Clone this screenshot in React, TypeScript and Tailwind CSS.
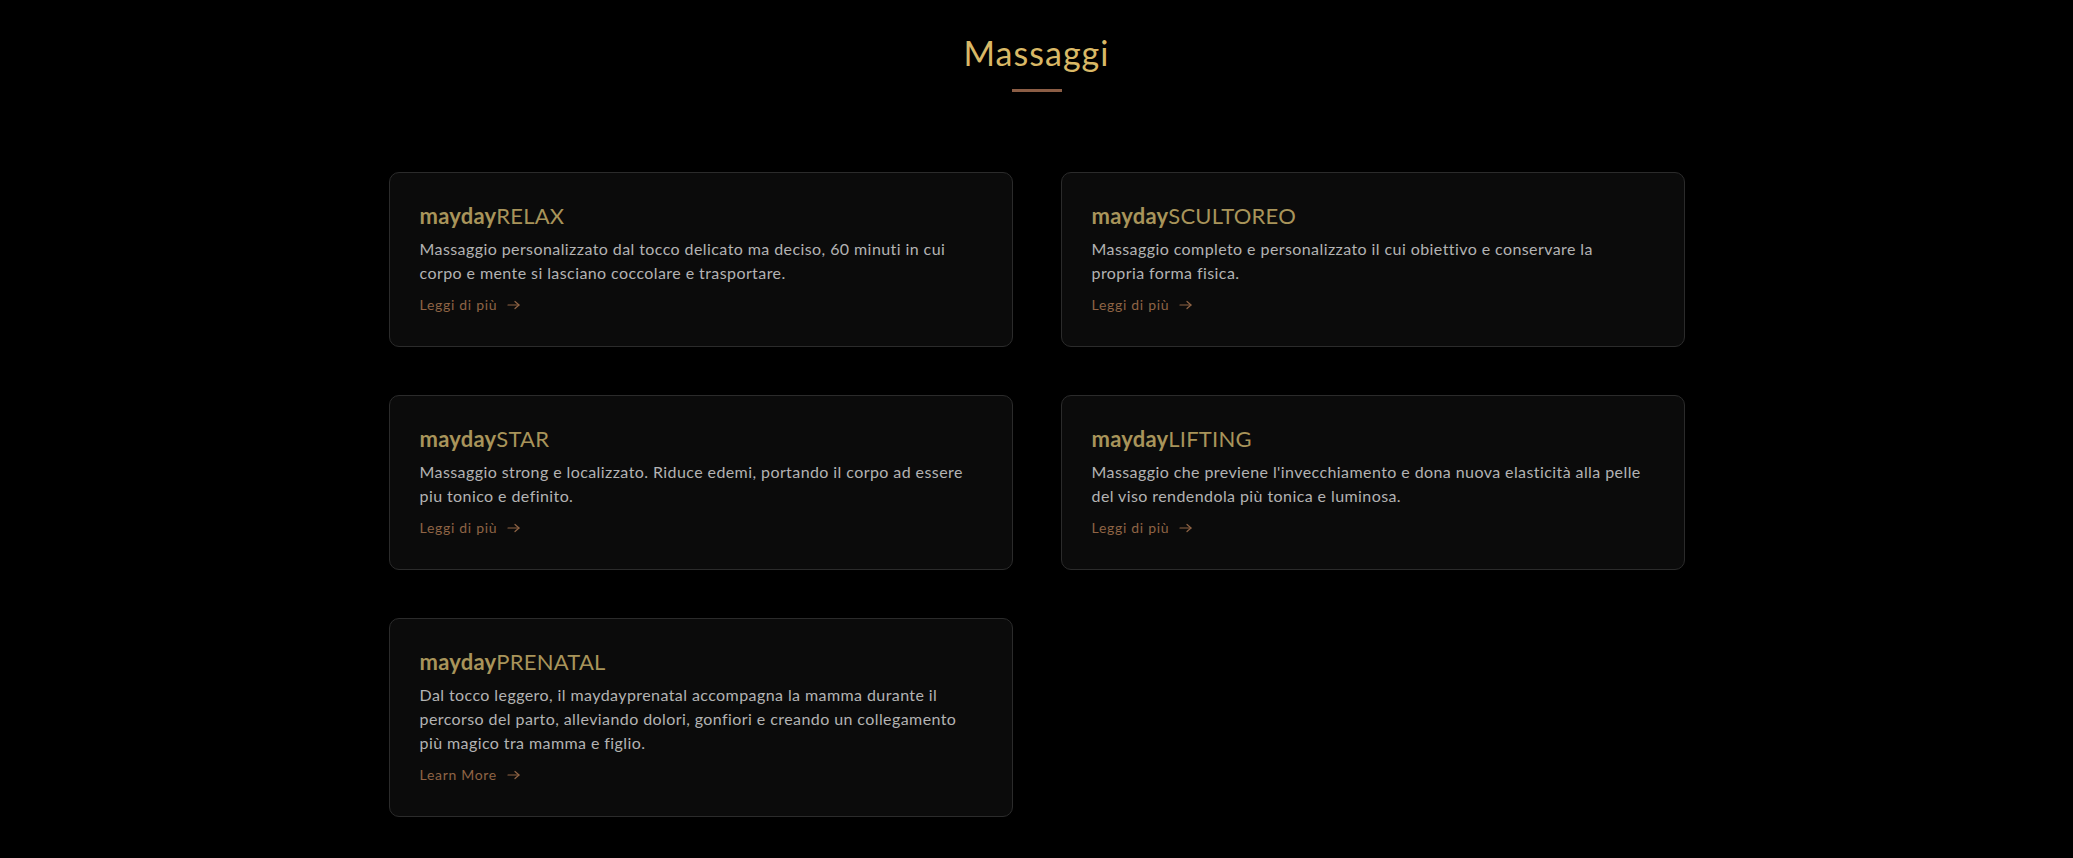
const services = [
  {
    name: "RELAX",
    text: "Massaggio personalizzato dal tocco delicato ma deciso, 60 minuti in cui corpo e mente si lasciano coccolare e trasportare.",
    link: "Leggi di più",
  },
  {
    name: "SCULTOREO",
    text: "Massaggio completo e personalizzato il cui obiettivo e conservare la propria forma fisica.",
    link: "Leggi di più",
  },
  {
    name: "STAR",
    text: "Massaggio strong e localizzato. Riduce edemi, portando il corpo ad essere piu tonico e definito.",
    link: "Leggi di più",
  },
  {
    name: "LIFTING",
    text: "Massaggio che previene l'invecchiamento e dona nuova elasticità alla pelle del viso rendendola più tonica e luminosa.",
    link: "Leggi di più",
  },
  {
    name: "PRENATAL",
    text: "Dal tocco leggero, il maydayprenatal accompagna la mamma durante il percorso del parto, alleviando dolori, gonfiori e creando un collegamento più magico tra mamma e figlio.",
    link: "Learn More",
  },
]

function Arrow() {
  return (
    <svg width="13" height="10" viewBox="0 0 13 10" fill="none" stroke="currentColor" strokeWidth="1.2" strokeLinecap="round" strokeLinejoin="round">
      <path d="M1 5h11" />
      <path d="M8 1.5 12 5 8 8.5" />
    </svg>
  )
}

function ServiceCard({name, text, link}: {name: string, text: string, link: string}) {
  return (
    <div className="bg-[#0b0b0b] border border-[#2b2b2b] rounded-[10px] pl-[30px] pr-[34px] pt-[28px] pb-[30px]">
      <h3 className="text-[22px] leading-[30px] font-bold text-[#a8945a] mb-[6px] tracking-[0.01em]">
        <span>mayday</span><span className="font-normal">{name}</span>
      </h3>
      <p className="text-[16px] leading-[24px] text-[#b3b3b3] tracking-[0.026em]">{text}</p>
      <a className="mt-[10px] inline-flex items-center gap-[10px] text-[14px] leading-[20px] text-[#8f6445] tracking-[0.05em]" href="#">
        {link}
        <Arrow />
      </a>
    </div>
  )
}

export default function App() {
  return (
    <div className="min-h-[858px] bg-black pt-[33px] pb-10 font-['Lato',sans-serif]">
      <div className="flex flex-col items-center">
        <h2 className="text-[34px] leading-[40px] text-[#d9b866] tracking-[0.03em]">Massaggi</h2>
        <div className="mt-[16px] w-[50px] h-[3px] bg-[#8b5d45]" />
      </div>

      <div className="mt-[80px] w-[1296px] mx-auto grid grid-cols-2 gap-12 items-start">
        {services.map((s) => (
          <ServiceCard key={s.name} name={s.name} text={s.text} link={s.link} />
        ))}
      </div>
    </div>
  )
}
